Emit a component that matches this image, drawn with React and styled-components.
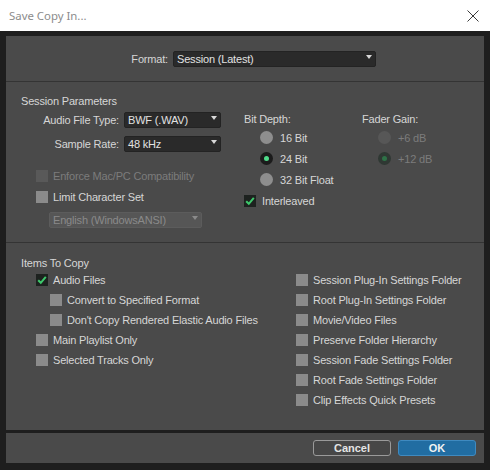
import React from 'react';
import styled, { createGlobalStyle } from 'styled-components';

const GlobalStyle = createGlobalStyle`
  html, body {
    margin: 0;
    padding: 0;
    background: #1e1e1e;
  }
  body {
    font-family: "Liberation Sans", Arial, sans-serif;
    font-size: 11px;
    letter-spacing: -0.18px;
  }
  * { box-sizing: border-box; }
`;

const Window = styled.div`
  width: 490px;
  height: 470px;
  display: flex;
  flex-direction: column;
  background: #1e1e1e;
  overflow: hidden;
`;

const TitleBar = styled.div`
  height: 31px;
  flex: none;
  background: #ffffff;
  display: flex;
  align-items: center;
  justify-content: space-between;
  padding: 0 11px 0 9px;
`;

const Title = styled.span`
  font-family: "Noto Sans", "Open Sans", sans-serif;
  font-size: 11.4px;
  letter-spacing: 0;
  color: #8c8c8c;
`;

const Frame = styled.div`
  flex: 1;
  display: flex;
  flex-direction: column;
  gap: 3px;
  padding: 5px 6px 7px;
`;

const Panel = styled.div`
  height: 394px;
  flex: none;
  background: #4a4a4a;
  display: flex;
  flex-direction: column;
`;

const ButtonPanel = styled.div`
  height: 30px;
  flex: none;
  background: #4a4a4a;
  display: flex;
  justify-content: flex-end;
  align-items: center;
  gap: 7px;
  padding-right: 8px;
`;

const Divider = styled.div`
  height: 1px;
  flex: none;
  background: #343434;
`;

const FormatSection = styled.div`
  height: 45px;
  flex: none;
  display: flex;
  align-items: center;
  gap: 5px;
  padding-left: 122px;
`;

const ParamsSection = styled.div`
  height: 160px;
  flex: none;
  padding: 12px 0 0 15px;
`;

const ItemsSection = styled.div`
  flex: 1;
  padding: 13px 0 0 15px;
`;

const SectionTitle = styled.div`
  line-height: 14px;
  color: #d6d6d6;
`;

const ParamsGrid = styled.div`
  display: grid;
  grid-template-columns: 223px 118px 1fr;
  margin-top: 4px;
`;

const ItemsGrid = styled.div`
  display: grid;
  grid-template-columns: 275px 1fr;
`;

const Column = styled.div`
  display: flex;
  flex-direction: column;
`;

const Label = styled.span`
  color: ${(p) => (p.$disabled ? '#7c7c7c' : '#d6d6d6')};
  white-space: nowrap;
`;

const FieldLabel = styled(Label)`
  width: ${(p) => p.$width || 98}px;
  text-align: right;
`;

const FieldRow = styled.div`
  display: flex;
  align-items: center;
  gap: 5px;
  height: 16px;
  margin-top: ${(p) => p.$top || 0}px;
  padding-left: ${(p) => p.$indent || 0}px;
`;

const OptionRow = styled.div`
  display: flex;
  align-items: center;
  gap: ${(p) => p.$gap || 5}px;
  height: ${(p) => p.$height || 20}px;
  margin-top: ${(p) => p.$top || 0}px;
  padding-left: ${(p) => p.$indent || 0}px;
`;

const GroupHeader = styled.div`
  height: 15px;
  line-height: 15px;
  color: #d6d6d6;
`;

const SelectBox = styled.div`
  width: ${(p) => p.$width}px;
  height: 16px;
  border-radius: 2px;
  background: ${(p) => (p.$disabled ? '#565656' : '#2a2a2a')};
  border: 1px solid ${(p) => (p.$disabled ? '#5c5c5c' : '#232323')};
  color: ${(p) => (p.$disabled ? '#8a8a8a' : '#e2e2e2')};
  display: flex;
  justify-content: space-between;
  padding: 0 3px 0 3px;
  line-height: 14px;
  white-space: nowrap;
`;

const Arrow = styled.span`
  width: 0;
  height: 0;
  margin-top: 3px;
  border-left: 3px solid transparent;
  border-right: 3px solid transparent;
  border-top: 4px solid ${(p) => (p.$disabled ? '#8a8a8a' : '#d8d8d8')};
`;

const Box = styled.span`
  width: 12px;
  height: 12px;
  flex: none;
  display: flex;
  align-items: center;
  justify-content: center;
  background: ${(p) =>
    p.$checked ? '#1d221f' : p.$disabled ? '#595959' : '#8b8b8b'};
`;

const RadioDot = styled.span`
  width: 13px;
  height: 13px;
  flex: none;
  border-radius: 50%;
  display: flex;
  align-items: center;
  justify-content: center;
  background: ${(p) =>
    p.$selected
      ? p.$disabled
        ? '#2f3833'
        : '#1b1b1b'
      : p.$disabled
      ? '#575757'
      : '#8e8e8e'};
  &::after {
    content: '';
    display: ${(p) => (p.$selected ? 'block' : 'none')};
    width: 5px;
    height: 5px;
    border-radius: 50%;
    background: ${(p) => (p.$disabled ? '#2e7247' : '#4fdc8a')};
  }
`;

const Button = styled.button`
  width: 78px;
  height: 16px;
  padding: 0;
  border-radius: 3px;
  font-family: "Liberation Sans", Arial, sans-serif;
  font-size: 11px;
  font-weight: bold;
  line-height: 14px;
  color: ${(p) => (p.$primary ? '#f2f2f2' : '#e4e4e4')};
  background: ${(p) => (p.$primary ? '#216da2' : '#474747')};
  border: 1px solid ${(p) => (p.$primary ? '#3f8ac0' : '#9a9a9a')};
`;

const Select = ({ width, disabled, children }) => (
  <SelectBox $width={width} $disabled={disabled}>
    <span>{children}</span>
    <Arrow $disabled={disabled} />
  </SelectBox>
);

const Check = ({ checked, disabled }) => (
  <Box $checked={checked} $disabled={disabled}>
    {checked && (
      <svg width="10" height="10" viewBox="0 0 10 10">
        <path d="M1.2 5.2 L3.8 7.8 L8.8 1.8" fill="none" stroke="#3ec96c" strokeWidth="2" />
      </svg>
    )}
  </Box>
);

const CheckOption = ({ label, checked, disabled, indent, height, top, gap }) => (
  <OptionRow $indent={indent} $height={height} $top={top} $gap={gap}>
    <Check checked={checked} disabled={disabled} />
    <Label $disabled={disabled}>{label}</Label>
  </OptionRow>
);

const RadioOption = ({ label, selected, disabled }) => (
  <OptionRow $indent={16} $height={21} $gap={7}>
    <RadioDot $selected={selected} $disabled={disabled} />
    <Label $disabled={disabled}>{label}</Label>
  </OptionRow>
);

const leftItems = [
  { label: 'Audio Files', checked: true, indent: 15 },
  { label: 'Convert to Specified Format', indent: 29 },
  { label: "Don't Copy Rendered Elastic Audio Files", indent: 29 },
  { label: 'Main Playlist Only', indent: 15 },
  { label: 'Selected Tracks Only', indent: 15 },
];

const rightItems = [
  'Session Plug-In Settings Folder',
  'Root Plug-In Settings Folder',
  'Movie/Video Files',
  'Preserve Folder Hierarchy',
  'Session Fade Settings Folder',
  'Root Fade Settings Folder',
  'Clip Effects Quick Presets',
];

export default function App() {
  return (
    <Window>
      <GlobalStyle />
      <TitleBar>
        <Title>Save Copy In...</Title>
        <svg width="12" height="12" viewBox="0 0 12 12">
          <path d="M0.5 0.5 L11.5 11.5 M11.5 0.5 L0.5 11.5" stroke="#3a3a3a" strokeWidth="1" />
        </svg>
      </TitleBar>
      <Frame>
        <Panel>
          <FormatSection>
            <FieldLabel $width={40}>Format:</FieldLabel>
            <Select width={203}>Session (Latest)</Select>
          </FormatSection>
          <Divider />
          <ParamsSection>
            <SectionTitle>Session Parameters</SectionTitle>
            <ParamsGrid>
              <Column>
                <FieldRow>
                  <FieldLabel>Audio File Type:</FieldLabel>
                  <Select width={97}>BWF (.WAV)</Select>
                </FieldRow>
                <FieldRow $top={8}>
                  <FieldLabel>Sample Rate:</FieldLabel>
                  <Select width={97}>48 kHz</Select>
                </FieldRow>
                <CheckOption label="Enforce Mac/PC Compatibility" disabled indent={15} height={21} top={13} />
                <CheckOption label="Limit Character Set" indent={15} height={21} />
                <FieldRow $top={5} $indent={28}>
                  <Select width={153} disabled>English (WindowsANSI)</Select>
                </FieldRow>
              </Column>
              <Column>
                <GroupHeader>Bit Depth:</GroupHeader>
                <RadioOption label="16 Bit" />
                <RadioOption label="24 Bit" selected />
                <RadioOption label="32 Bit Float" />
                <CheckOption label="Interleaved" checked height={21} gap={6} />
              </Column>
              <Column>
                <GroupHeader>Fader Gain:</GroupHeader>
                <RadioOption label="+6 dB" disabled />
                <RadioOption label="+12 dB" selected disabled />
              </Column>
            </ParamsGrid>
          </ParamsSection>
          <Divider />
          <ItemsSection>
            <SectionTitle>Items To Copy</SectionTitle>
            <ItemsGrid>
              <Column>
                {leftItems.map((it) => (
                  <CheckOption key={it.label} label={it.label} checked={it.checked} indent={it.indent} />
                ))}
              </Column>
              <Column>
                {rightItems.map((label) => (
                  <CheckOption key={label} label={label} />
                ))}
              </Column>
            </ItemsGrid>
          </ItemsSection>
        </Panel>
        <ButtonPanel>
          <Button>Cancel</Button>
          <Button $primary>OK</Button>
        </ButtonPanel>
      </Frame>
    </Window>
  );
}
